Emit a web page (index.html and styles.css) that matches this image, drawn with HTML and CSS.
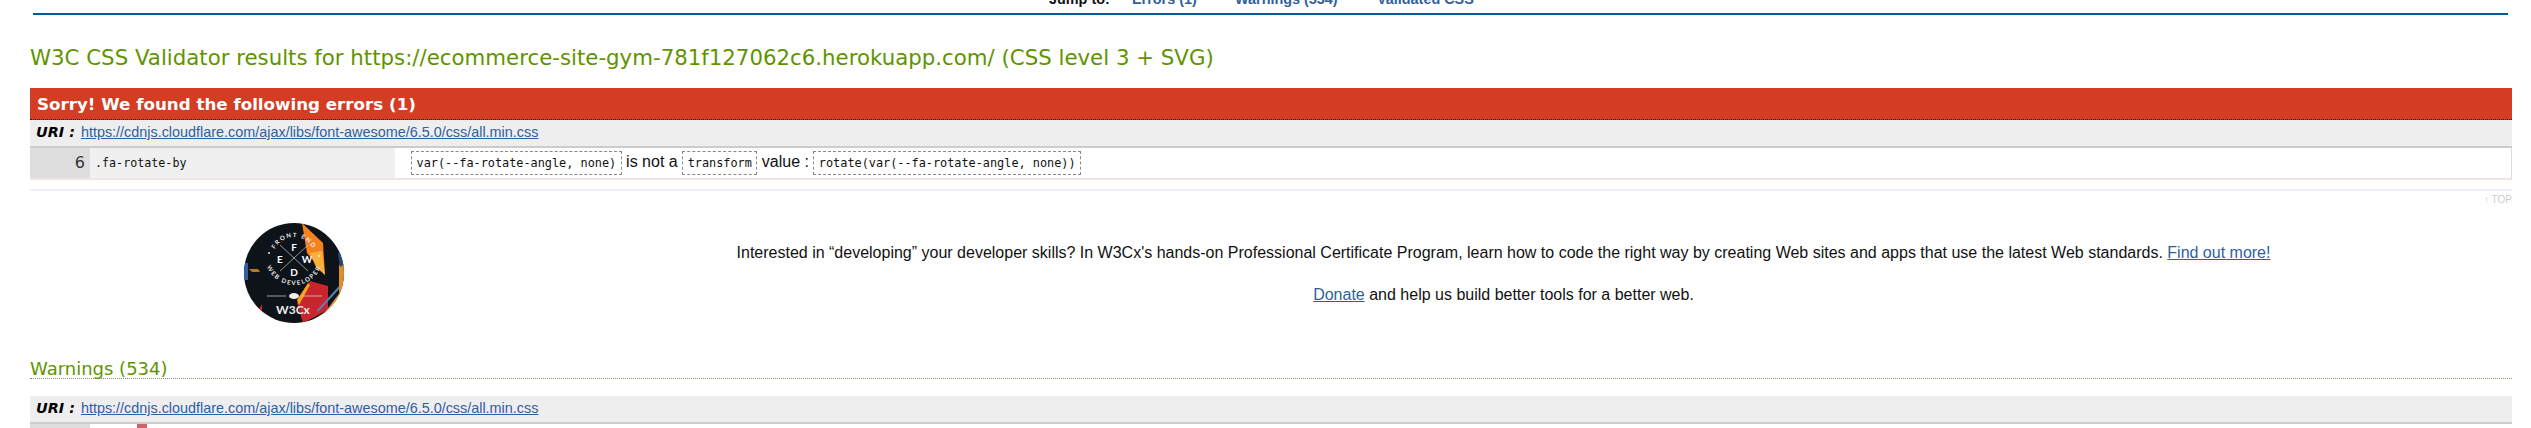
FILE: index.html
```html
<!DOCTYPE html>
<html lang="en">
<head>
    <meta charset="UTF-8">
    <title>W3C CSS Validator results</title>
    <link rel="stylesheet" href="styles.css">
</head>
<body>
    <nav class="jump">
        <strong class="jump-label">Jump to:</strong>
        <a href="#errors">Errors (1)</a>
        <a href="#warnings">Warnings (534)</a>
        <a href="#css">Validated CSS</a>
    </nav>

    <h2 class="titre">W3C CSS Validator results for https://ecommerce-site-gym-781f127062c6.herokuapp.com/ (CSS level 3 + SVG)</h2>

    <section id="errors">
        <h3 class="erros-titre">Sorry! We found the following errors (1)</h3>
        <div class="uri"><b>URI :</b> <a href="#">https://cdnjs.cloudflare.com/ajax/libs/font-awesome/6.5.0/css/all.min.css</a></div>
        <div class="linha">
            <div class="num">6</div>
            <div class="seletor">.fa-rotate-by</div>
            <div class="msg">
                <code>var(--fa-rotate-angle, none)</code> is not a <code>transform</code> value : <code>rotate(var(--fa-rotate-angle, none))</code>
            </div>
        </div>
        <div class="sep"></div>
        <div class="topo">↑ TOP</div>
    </section>

    <section class="promo">
        <div class="promo-logo">
            <svg width="100" height="100" viewBox="0 0 100 100">
                <defs>
                    <clipPath id="disco"><circle cx="50" cy="50" r="50"/></clipPath>
                    <path id="arcoCima" d="M 29 35 A 21 21 0 0 1 71 35"/>
                    <path id="arcoBaixo" d="M 21 33 A 29 29 0 0 0 79 33"/>
                </defs>
                <g clip-path="url(#disco)">
                    <rect width="100" height="100" fill="#0e1319"/>
                    <polygon points="58,0 79,20 81,52 63,30" fill="#f58220"/>
                    <polygon points="66,30 78,28 81,52 72,44" fill="#fbb03b"/>
                    <polygon points="66,58 84,63 84,87 59,100 53,80" fill="#c8252c"/>
                    <polygon points="53,77 64,60 66,62 55,82" fill="#f9a11b"/>
                    <polygon points="73,100 100,64 100,70 80,100" fill="#e8a33d"/>
                    <polygon points="73,87 96,62 97,64 74,89" fill="#5b7fb5"/>
                    <polygon points="95,42 100,40 100,66 95,70" fill="#e08e2c"/>
                    <polygon points="94,30 100,30 100,42 96,44" fill="#2b4a78"/>
                    <polygon points="0,40 4,40 4,57 0,57" fill="#33609b"/>
                    <polygon points="5,46 14,46 16,49 8,49" fill="#b5762a"/>
                    <polygon points="14,88 18,81 18,92" fill="#c8252c"/>
                </g>
                <line x1="36" y1="22" x2="64" y2="48" stroke="#ccc" stroke-width="0.7"/>
                <line x1="64" y1="22" x2="36" y2="48" stroke="#ccc" stroke-width="0.7"/>
                <g class="logo-letra">
                    <text x="50" y="28" text-anchor="middle">F</text>
                    <text x="36" y="40" text-anchor="middle">E</text>
                    <text x="63" y="40" text-anchor="middle">W</text>
                    <text x="50" y="53" text-anchor="middle">D</text>
                </g>
                <text class="logo-arco"><textPath href="#arcoCima" startOffset="50%" text-anchor="middle">FRONT END</textPath></text>
                <text class="logo-arco"><textPath href="#arcoBaixo" startOffset="50%" text-anchor="middle">WEB DEVELOPER</textPath></text>
                <circle cx="25" cy="30" r="1" fill="#eee"/>
                <circle cx="75" cy="33" r="1" fill="#eee"/>
                <line x1="23" y1="73" x2="42" y2="73" stroke="#ddd" stroke-width="0.7"/>
                <line x1="58" y1="73" x2="78" y2="73" stroke="#ddd" stroke-width="0.7"/>
                <ellipse cx="50" cy="73" rx="5" ry="3" fill="#eee"/>
                <text class="logo-w3cx" x="49" y="91" text-anchor="middle">W3Cx</text>
            </svg>
        </div>
        <div class="promo-texto">
            <p>Interested in “developing” your developer skills? In W3Cx's hands-on Professional Certificate Program, learn how to code the right way by creating Web sites and apps that use the latest Web standards. <a href="#">Find out more!</a></p>
            <p><a href="#">Donate</a> and help us build better tools for a better web.</p>
        </div>
    </section>

    <section id="warnings">
        <h2 class="avisos-titre">Warnings (534)</h2>
        <div class="uri"><b>URI :</b> <a href="#">https://cdnjs.cloudflare.com/ajax/libs/font-awesome/6.5.0/css/all.min.css</a></div>
        <div class="linha-aviso">
            <div class="num"></div>
            <div class="marca"></div>
        </div>
    </section>
</body>
</html>
```

FILE: styles.css
```css
:root {
    --verde: #5f9400;
    --link: #2f5f9e;
}
html, body {
    height: 428px;
    overflow: hidden;
}
body {
    margin: 0;
    padding: 0 19px 0 30px;
    background: white;
    color: #111;
    font-family: 'Liberation Sans', Arial, sans-serif;
    font-size: 16px;
}
a {
    color: var(--link);
}
.jump {
    display: flex;
    align-items: flex-end;
    height: 13px;
    margin-left: 3px;
    margin-right: 4px;
    padding-left: 1016px;
    border-bottom: 2px solid #005a9c;
    overflow: hidden;
    font-size: 14.4px;
    line-height: 18px;
}
.jump > * {
    flex: none;
    margin-bottom: 5px;
}
.jump a {
    font-weight: bold;
    text-decoration: none;
}
.jump-label {
    width: 83px;
}
.jump a:nth-of-type(1) {
    width: 103px;
}
.jump a:nth-of-type(2) {
    width: 142px;
}
.titre {
    margin: 27px 0 0;
    height: 31px;
    font-family: 'DejaVu Sans', Verdana, sans-serif;
    font-size: 21.3px;
    line-height: 31px;
    font-weight: normal;
    color: var(--verde);
}
.erros-titre {
    margin: 15px 0 0;
    height: 31px;
    padding-left: 7px;
    background: #d43d24;
    border-bottom: 1px dotted #222;
    color: white;
    font-family: 'DejaVu Sans', Verdana, sans-serif;
    font-size: 16.7px;
    line-height: 32px;
}
.uri {
    height: 26px;
    padding-left: 6px;
    background: #eee;
    border-bottom: 2px solid #ccc;
    font-size: 14.4px;
    line-height: 25px;
}
.uri b {
    margin-right: 2px;
    font-family: 'DejaVu Sans', Verdana, sans-serif;
    font-size: 14.4px;
    font-style: italic;
    color: black;
}
.linha {
    display: flex;
    height: 30px;
    border-bottom: 2px solid #f8e2e0;
    border-right: 1px solid #ddd;
}
.num {
    flex: none;
    width: 55px;
    padding-right: 5px;
    background: #ddd;
    text-align: right;
    font-family: 'DejaVu Sans', Verdana, sans-serif;
    font-size: 16px;
    line-height: 30px;
    color: #333;
}
.seletor {
    flex: none;
    width: 300px;
    padding-left: 5px;
    background: #f0f0f0;
    font-family: 'DejaVu Sans Mono', monospace;
    font-size: 11.7px;
    line-height: 30px;
}
.msg {
    flex: 1;
    padding-left: 16px;
    line-height: 28px;
}
.msg code {
    padding: 4px 4.5px;
    border: 1px dashed #888;
    font-family: 'DejaVu Sans Mono', monospace;
    font-size: 11.85px;
}
.sep {
    margin-top: 9px;
    border-bottom: 2px solid #eeeeff;
}
.topo {
    height: 17px;
    text-align: right;
    font-size: 10px;
    line-height: 18px;
    color: #ccc;
}
.promo {
    display: flex;
    align-items: center;
    height: 130px;
}
.promo-logo {
    flex: none;
    width: 214px;
    padding-left: 214px;
}
.promo-logo svg {
    display: block;
}
.logo-letra text {
    fill: white;
    font-family: 'Lato', sans-serif;
    font-weight: bold;
    font-size: 10px;
}
.logo-arco {
    fill: #eee;
    font-family: 'Lato', sans-serif;
    font-weight: bold;
    font-size: 6px;
    letter-spacing: 1.5px;
}
.logo-w3cx {
    fill: #eee;
    font-family: 'Lato', sans-serif;
    font-weight: bold;
    font-size: 12px;
}
.promo-texto {
    flex: 1;
    padding-left: 37px;
    padding-top: 2px;
    text-align: center;
}
.promo-texto p {
    margin: 0 0 24px;
    line-height: 18px;
}
.promo-texto p:last-child {
    margin-bottom: 0;
}
.avisos-titre {
    margin: 16px 0 0;
    height: 24px;
    border-bottom: 1px dotted #8a8a60;
    font-family: 'DejaVu Sans', Verdana, sans-serif;
    font-size: 18px;
    line-height: 30px;
    font-weight: normal;
    color: var(--verde);
}
#warnings .uri {
    margin-top: 17px;
}
.linha-aviso {
    display: flex;
    height: 20px;
}
.linha-aviso .num {
    height: 20px;
}
.marca {
    flex: none;
    width: 10px;
    height: 20px;
    margin-left: 47px;
    background: #cc6666;
}
```
